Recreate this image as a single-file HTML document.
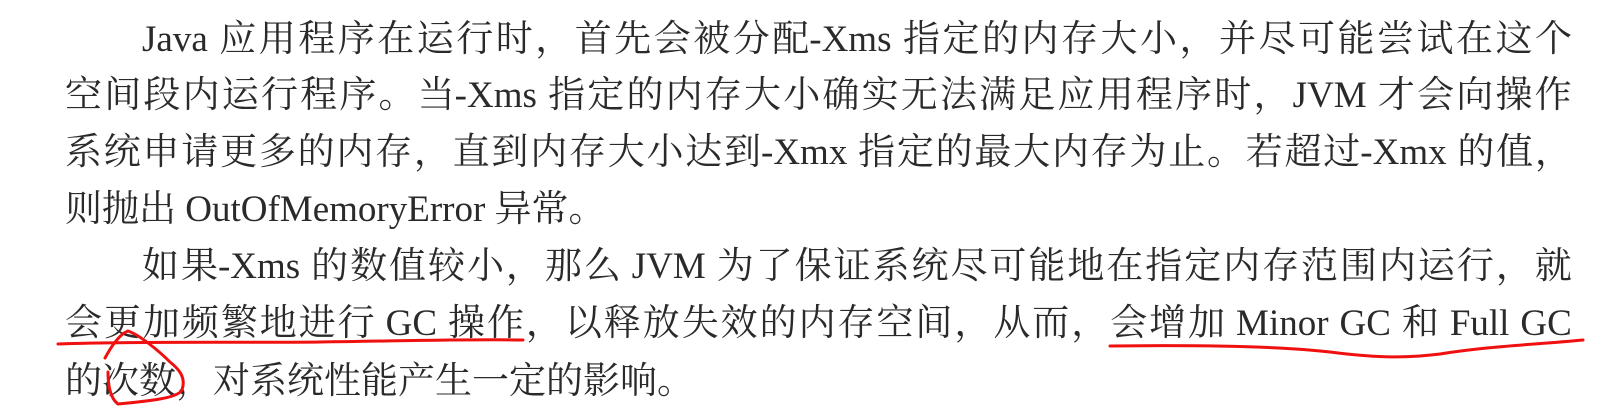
<!DOCTYPE html>
<html><head><meta charset="utf-8"><style>
html,body{margin:0;padding:0;background:#fff;width:1620px;height:406px;overflow:hidden}
.l{position:absolute;font-family:"Liberation Serif","Noto Serif CJK SC",serif;font-size:37px;line-height:56px;color:#2a2a2a;white-space:nowrap}
.j{display:flex;justify-content:space-between}
.sp{margin-right:9px}
.sl{margin-left:9px}
</style></head><body>
<div class="l j" style="left:142px;top:12px;width:1430px">Java 应用程序在运行时，首先会被分配-Xms 指定的内存大小，并尽可能尝试在这个</div>
<div class="l j" style="left:65px;top:68px;width:1507px">空间段内运行程序。当-Xms 指定的内存大小确实无法满足应用程序时，JVM 才会向操作</div>
<div class="l j" style="left:65px;top:125px;width:1507px">系统申请更多的内存，直到内存大小达到-Xmx 指定的最大内存为止。若超过-Xmx 的值，</div>
<div class="l" style="left:65px;top:182px">则抛出 OutOfMemoryError 异常。</div>
<div class="l j" style="left:142px;top:239px;width:1430px">如果-Xms 的数值较小，那么 JVM 为了保证系统尽可能地在指定内存范围内运行，就</div>
<div class="l j" style="left:65px;top:296px;width:1507px">会更加频繁地进行 GC 操作，以释放失效的内存空间，从而，会增加 Minor GC 和 Full GC</div>
<div class="l" style="left:65px;top:354px">的次数，对系统性能产生一定的影响。</div>
<svg width="1620" height="406" style="position:absolute;left:0;top:0" fill="none" stroke="#f01010" stroke-width="3" stroke-linecap="round">
<path d="M58 344 C150 341 250 343 320 342 C400 341 470 339 523 340"/>
<path d="M1110 346 C1200 345 1280 346 1330 352 C1370 357 1400 359 1440 354 C1490 346 1530 345 1583 340"/>
<path d="M105 358 C112 345 120 334 128 331 C140 335 160 352 170 362 C180 370 186 378 182 390 C178 398 150 401 118 404 C110 398 108 385 108 372"/>
</svg>
<script>
document.querySelectorAll('.j').forEach(function(d){
  var t=d.textContent.trim();
  var re=/[^\s]?-[A-Za-z]+|[A-Za-z]+|\S/g,m;
  d.innerHTML='';
  while((m=re.exec(t))){var w=m[0],i=m.index;var s=document.createElement('span');s.textContent=w;
    var c=[];
    var after=t.charAt(i+w.length)===' ';
    var nextLat=/[A-Za-z]/.test(t.charAt(i+w.length+1));
    if(/[A-Za-z]$/.test(w)&&after&&!nextLat)c.push('sp');
    if(/^[A-Za-z]/.test(w)&&i>0&&t.charAt(i-1)===' ')c.push('sl');
    s.className=c.join(' ');d.appendChild(s);}
});
</script>
</body></html>
